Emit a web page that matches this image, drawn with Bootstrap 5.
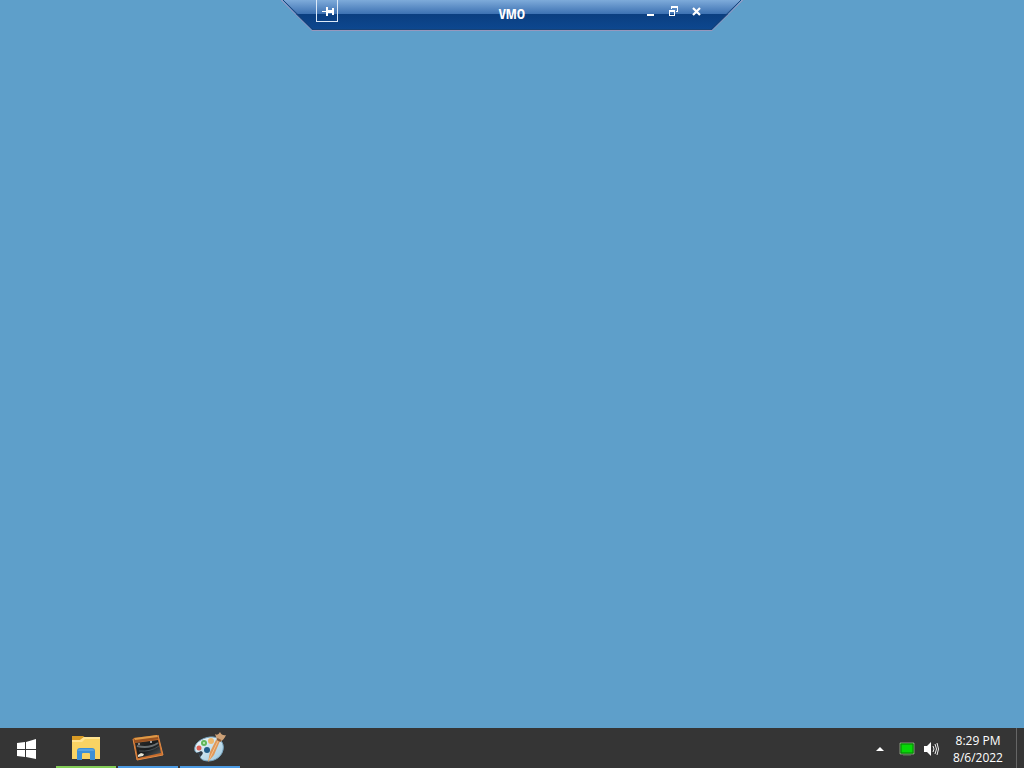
<!DOCTYPE html>
<html lang="en">
<head>
<meta charset="utf-8">
<meta name="viewport" content="width=device-width, initial-scale=1">
<title>VMO</title>
<link rel="stylesheet" href="https://cdn.jsdelivr.net/npm/bootstrap@5.3.0/dist/css/bootstrap.min.css">
<style>
  body { background: #5e9fca; font-family: "Open Sans", "Noto Sans", sans-serif; font-size: 12px; line-height: 17px; }
  svg { display: block; }
  button { color: #fff; }
  .session-bar { width: 462px; height: 31px; }
  .session-bar .backdrop { inset: 0; z-index: -1; }
  .session-title { font: bold 14px/28px "Open Sans Condensed", "Roboto Condensed", "Liberation Sans Narrow", "Liberation Sans", sans-serif; }
  .pin { width: 22px; height: 22px; border: 1px solid #dce9f8; border-top: 0; }
  .side { width: 164px; padding: 0 35px; }
  .side.end { padding: 5px 41px 0 0; gap: 11px; }
  .taskbar { height: 40px; background: #353535; color: #fff; }
  .start { width: 54px; padding-top: 2px !important; }
  .tasks { margin-left: 2px; gap: 2px; }
  .task { width: 60px; padding-top: 2px !important; border-bottom: 2px solid #4c9be4 !important; }
  .task.files { border-color: #83cd57 !important; }
  .tray { gap: 5px; padding-top: 2px; }
  .clock { width: 76px; padding: 4px 0 2px; }
  .show-desktop { width: 8px; border-left: 1px solid #666 !important; }
</style>
</head>
<body class="min-vh-100 d-flex flex-column overflow-hidden">
<header class="session-bar position-relative z-1 mx-auto d-flex align-items-start justify-content-between">
  <svg class="backdrop position-absolute" width="462" height="31" viewBox="0 0 462 31" aria-hidden="true">
    <defs>
      <linearGradient id="glass" x1="0" y1="0" x2="0" y2="1">
        <stop offset="0" stop-color="#7eabda"/><stop offset=".46" stop-color="#3e72b3"/>
        <stop offset=".47" stop-color="#0b3e80"/><stop offset="1" stop-color="#0d4890"/>
      </linearGradient>
    </defs>
    <path d="M0 0H462L431 30H31Z" fill="url(#glass)"/>
    <path d="M2 0L32 29.500H430L460 0" fill="none" stroke="#174277"/>
    <path d="M0 0L31 30.500H431L462 0" fill="none" stroke="#9797bd"/>
  </svg>
  <div class="side">
    <button class="pin btn rounded-0 p-0" aria-label="Pin">
      <svg width="20" height="21" viewBox="0 0 20 21" shape-rendering="crispEdges" fill="#fff"><path d="M5 11h4v1H5zM9 7h2v9H9zM11 10h5v3h-5zM15 8h2v7h-2z"/></svg>
    </button>
  </div>
  <div class="session-title text-white">VMO</div>
  <div class="side end d-flex justify-content-end">
    <button class="btn border-0 p-0" aria-label="Minimize"><svg width="12" height="12" viewBox="0 0 12 12"><path d="M3 9h7v2H3z" fill="#fff"/></svg></button>
    <button class="btn border-0 p-0" aria-label="Restore"><svg width="12" height="12" viewBox="0 0 12 12" shape-rendering="crispEdges" fill="#fff"><path d="M4 1h7v6H9V6h1V3H5v1H4zM2 5h6v6H2zM3 7v3h4V7z" fill-rule="evenodd"/></svg></button>
    <button class="btn border-0 p-0" aria-label="Close"><svg width="12" height="12" viewBox="0 0 12 12"><path d="M3 3L10 10M10 3L3 10" fill="none" stroke="#fff" stroke-width="2.200"/></svg></button>
  </div>
</header>
<main class="flex-grow-1" aria-label="Desktop"></main>
<footer class="taskbar d-flex align-items-stretch">
  <button class="start btn border-0 rounded-0 p-0 d-flex align-items-center justify-content-center" aria-label="Start">
    <svg width="20" height="20" viewBox="0 0 20 20"><path d="M0 4L8 3V10H0zM9 3L19 0V10H9zM0 11H8V18L0 17zM9 11H19V20L9 18z" fill="#fff"/></svg>
  </button>
  <nav class="tasks d-flex" aria-label="Running applications">
    <button class="task files btn border-0 rounded-0 p-0 d-flex align-items-center justify-content-center" aria-label="File Explorer">
      <svg width="32" height="32" viewBox="0 0 32 32"><path d="M2 4h11l3 2h-3l-3 3H2z" fill="#d99b25"/><path d="M2 8h8l4-3h16v22H2z" fill="#f9d363"/><path d="M2 8h8l4-3h16v2H15l-3 3H2z" fill="#ffe391"/><path d="M7 28V19q0-3 3-3h12q3 0 3 3v9h-5v-6q0-1-1-1h-6q-1 0-1 1v6z" fill="#3c8fd6"/><path d="M8 19q0-2 2-2h12q2 0 2 2z" fill="#58a3df"/></svg>
    </button>
    <button class="task btn border-0 rounded-0 p-0 d-flex align-items-center justify-content-center" aria-label="Virtual machine">
      <svg width="32" height="32" viewBox="0 0 32 32">
        <defs><linearGradient id="screen" x2="1" y2="1"><stop stop-color="#302f2c"/><stop offset=".5" stop-color="#171b1d"/><stop offset="1" stop-color="#5b6265"/></linearGradient></defs>
        <path d="M1 7L26 3L31 23L5 28Z" fill="#c76c2c"/><path d="M1 6L26 3L27 7L2 11Z" fill="#995322"/><path d="M2 6L25 3L26 5L3 8Z" fill="#e09a46"/><path d="M3 11L26 8L29 21L6 26Z" fill="url(#screen)"/><path d="M5 14Q17 17 26 11" fill="none" stroke="#686e70" stroke-width="2"/><path d="M7 19Q19 20 27 14" fill="none" stroke="#454e52"/><circle cx="7" cy="12" r="1" fill="#aaa"/><circle cx="19" cy="10" r="1" fill="#ccc"/><path d="M6 23l3-2 3 1-1 2-5 1z" fill="#e6e4d3"/><path d="M1 7L5 28L31 23L26 3" fill="none" stroke="#e18b45"/>
      </svg>
    </button>
    <button class="task btn border-0 rounded-0 p-0 d-flex align-items-center justify-content-center" aria-label="Paint">
      <svg width="34" height="34" viewBox="0 0 34 34">
        <defs><linearGradient id="palette" x2="1" y2="1"><stop stop-color="#f6fbfc"/><stop offset="1" stop-color="#9bc7de"/></linearGradient></defs>
        <path d="M2 20C0 12 9 7 17 6C25 5 32 11 30 19C28 28 18 32 10 29C6 27 8 24 6 22C4 21 3 22 2 20Z" fill="url(#palette)" stroke="#79a5bf"/>
        <path d="M4 22L8 20Q11 21 9 24L7 26Q6 22 4 22Z" fill="#303942"/>
        <circle cx="6" cy="17" r="2.500" fill="#dc6055"/><circle cx="11" cy="12" r="3" fill="#61b75b"/><circle cx="11" cy="12" r="1" fill="#caf0c0"/><circle cx="18" cy="10" r="3" fill="#edb76b"/><circle cx="14" cy="19" r="3" fill="#225c87"/>
        <path d="M15 31L17 21L23 9L27 10L21 24Z" fill="#df9858"/><path d="M16 29L25 10" stroke="#f4c08d"/><path d="M24 9L22 3Q25 5 27 1Q29 5 33 4Q31 9 27 11Z" fill="#cda177"/><path d="M24 8L28 10" stroke="#8b5b38" stroke-width="2"/>
      </svg>
    </button>
  </nav>
  <div class="ms-auto d-flex align-items-stretch">
    <div class="tray d-flex align-items-center">
      <button class="btn border-0 p-0 me-1" aria-label="Show hidden icons"><svg width="16" height="16" viewBox="0 0 16 16"><path d="M4 10L8 6L12 10Z" fill="#fff"/></svg></button>
      <button class="btn border-0 p-0" aria-label="Display"><svg width="20" height="16" viewBox="0 0 20 16"><path d="M3 2h14v11H3z" fill="#07d907" stroke="#8a9580"/><path d="M4 3h12v9H4z" fill="none" stroke="#087f08"/><path d="M6 14h8" stroke="#548850"/></svg></button>
      <button class="btn border-0 p-0" aria-label="Volume"><svg width="18" height="16" viewBox="0 0 18 16"><path d="M2 5h3l4-4v14l-4-4H2z" fill="#fff"/><path d="M11 5q2 3 0 6M13 3q3 5 0 10M15 2q3 6 0 12" fill="none" stroke="#eee"/></svg></button>
    </div>
    <time class="clock text-center" datetime="2022-08-06T20:29">8:29 PM<br>8/6/2022</time>
    <button class="show-desktop btn border-0 rounded-0 p-0" aria-label="Show desktop"></button>
  </div>
</footer>
<script src="https://cdn.jsdelivr.net/npm/bootstrap@5.3.0/dist/js/bootstrap.bundle.min.js"></script>
</body>
</html>
